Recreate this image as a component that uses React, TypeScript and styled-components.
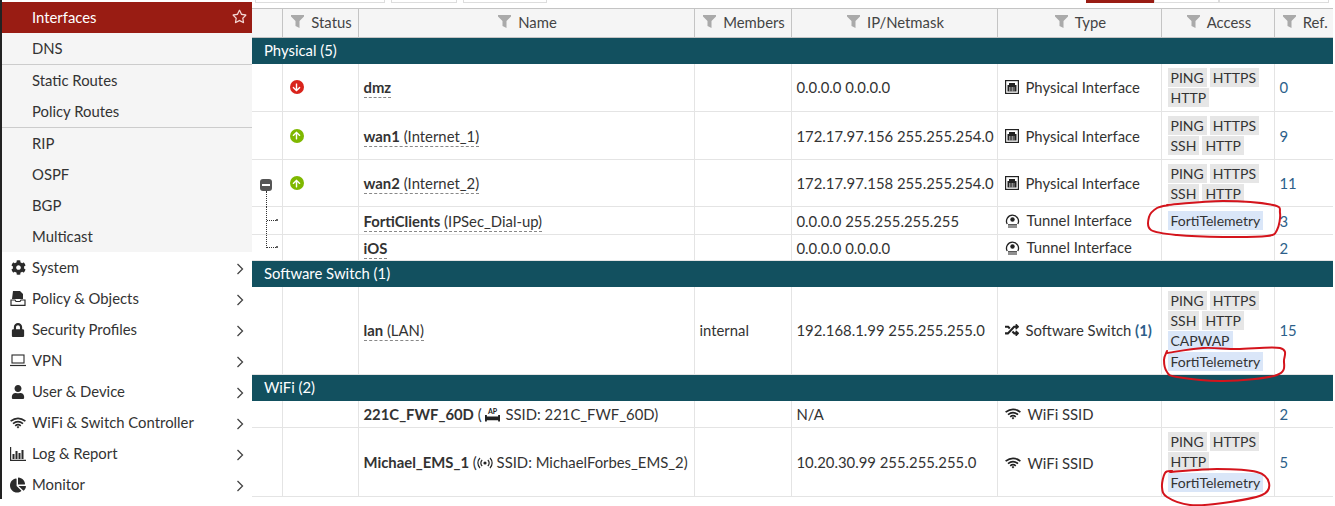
import React from "react";
import styled, { createGlobalStyle } from "styled-components";
import { FaCog, FaLock, FaUser, FaChartPie, FaRegStar, FaRandom, FaArrowUp, FaArrowDown } from "react-icons/fa";

const GlobalStyle = createGlobalStyle`
  html, body {
    margin: 0;
    padding: 0;
    background: #fff;
  }
  body {
    font-family: Lato, "Open Sans", sans-serif;
    font-size: 14.85px;
    color: #333;
    overflow: hidden;
  }
`;

const Page = styled.div`
  position: relative;
  width: 1335px;
  height: 506px;
  display: flex;
  overflow: hidden;
`;

const Sidebar = styled.nav`
  width: 252px;
  height: 499px;
  flex: none;
  box-sizing: border-box;
  border-left: 2px solid #222;
  padding-top: 2px;
  background: #fff;
`;

const SubMenu = styled.div`
  background: #f5f5f5;
`;

const SubItem = styled.div<{ $active?: boolean; $divider?: boolean }>`
  height: ${(p) => (p.$divider ? "32px" : "31px")};
  box-sizing: border-box;
  display: flex;
  align-items: center;
  justify-content: space-between;
  padding: 0 5px 2px 30px;
  background: ${(p) => (p.$active ? "#991c13" : "transparent")};
  color: ${(p) => (p.$active ? "#fff" : "#333")};
  border-bottom: ${(p) => (p.$divider ? "1px solid #ccc" : "none")};
`;

const MenuItem = styled.div`
  height: 31px;
  box-sizing: border-box;
  display: flex;
  align-items: center;
  gap: 6px;
  padding: 0 8px 2px 8px;
  color: #333;
  background: #fff;
`;

const MenuIcon = styled.span`
  width: 16px;
  height: 16px;
  margin-top: 2px;
  display: flex;
  align-items: center;
  justify-content: center;
  color: #2b2b2b;
  flex: none;
`;

const MenuLabel = styled.span`
  flex: 1;
`;

const Main = styled.main`
  flex: 1;
  min-width: 0;
  padding-right: 2px;
`;

const Toolbar = styled.div`
  height: 8px;
  display: flex;
  padding-left: 3px;
  overflow: hidden;
`;

const ToolBox = styled.div<{ $width: number; $left: number; $active?: boolean }>`
  width: ${(p) => p.$width}px;
  margin-left: ${(p) => p.$left}px;
  height: 8px;
  box-sizing: border-box;
  margin-top: -5px;
  flex: none;
  background: ${(p) => (p.$active ? "#991c13" : "#fff")};
  border: 1px solid ${(p) => (p.$active ? "#991c13" : "#ddd")};
`;

const Table = styled.table`
  width: 1081px;
  border-collapse: collapse;
  table-layout: fixed;
`;

const HeadCell = styled.th<{ $w: number }>`
  width: ${(p) => p.$w}px;
  height: 29px;
  box-sizing: border-box;
  padding: 0 0 2px 3px;
  background: #f5f5f5;
  font-weight: 400;
  font-size: 14.85px;
  color: #444;
  border-top: 1px solid #c4c4c4;
  border-bottom: 1px solid #c4c4c4;
  border-left: 1px solid #c4c4c4;
  &:first-child {
    border-left: none;
  }
`;

const HeadInner = styled.span`
  display: inline-flex;
  align-items: center;
  gap: 7px;
`;

const GroupCell = styled.td`
  height: 26px;
  padding: 0 0 2px 12px;
  box-sizing: border-box;
  background: #12505f;
  color: #fff;
`;

const Row = styled.tr<{ $h: number }>`
  height: ${(p) => p.$h}px;
`;

const Cell = styled.td`
  padding: 0 0 0 5px;
  box-sizing: border-box;
  white-space: nowrap;
  overflow: visible;
  border-left: 1px solid #e4e4e4;
  border-bottom: 1px solid #e4e4e4;
  color: #333;
`;

const StatusCell = styled(Cell)`
  padding: 0 0 0 7px;
`;

const ExpandCell = styled(Cell)`
  position: relative;
  border-left: none;
  padding: 0;
`;

const NameLink = styled.span<{ $plain?: boolean }>`
  border-bottom: ${(p) => (p.$plain ? "none" : "1px dashed #888")};
  padding-bottom: 1px;
  & > b {
    font-weight: 700;
    color: #333;
  }
`;

const Dot = styled.span<{ $color: string }>`
  display: flex;
  align-items: center;
  justify-content: center;
  width: 14px;
  height: 14px;
  border-radius: 50%;
  background: ${(p) => p.$color};
  color: #fff;
`;

const MinusBox = styled.span`
  position: absolute;
  left: 8px;
  top: 19px;
  width: 12px;
  height: 12px;
  border-radius: 3px;
  background: #555;
  display: flex;
  align-items: center;
  justify-content: center;
  &::after {
    content: "";
    width: 8px;
    height: 2px;
    background: #fff;
  }
  &::before {
    content: "";
    position: absolute;
    top: 12px;
    left: 6px;
    height: 16px;
    border-left: 1px dotted #333;
  }
`;

const TreeLine = styled.span<{ $end?: boolean }>`
  position: absolute;
  left: 14px;
  top: 0;
  height: ${(p) => (p.$end ? "13px" : "100%")};
  border-left: 1px dotted #333;
  &::after {
    content: "";
    position: absolute;
    top: ${(p) => (p.$end ? "12px" : "13px")};
    left: 0;
    width: 9px;
    border-top: 1px dotted #333;
  }
  &::before {
    content: "";
    position: absolute;
    top: ${(p) => (p.$end ? "11px" : "12px")};
    left: 9px;
    width: 2px;
    height: 2px;
    border-radius: 50%;
    background: #333;
  }
`;

const TypeWrap = styled.span`
  display: inline-flex;
  align-items: center;
  gap: 7px;
  padding: 1px 0 0 2px;
`;

const Count = styled.b`
  color: #2d5f8a;
  font-weight: 700;
`;

const TagCell = styled(Cell)`
  padding: 4px 0 0 6px;
  white-space: normal;
  line-height: 0;
  vertical-align: top;
`;

const Tag = styled.span<{ $blue?: boolean }>`
  display: inline-block;
  height: 19px;
  line-height: 19px;
  padding: 0 3px;
  margin: 0 3px 1.4px 0;
  font-size: 14px;
  background: ${(p) => (p.$blue ? "#dae6f8" : "#e6e6e6")};
  color: #333;
`;

const RefCell = styled(Cell)`
  color: #2d5f8a;
`;

const Annotation = styled.svg`
  position: absolute;
  inset: 0;
  width: 1335px;
  height: 506px;
  pointer-events: none;
`;

const Funnel = () => (
  <svg width="13" height="13" viewBox="0 0 13 13">
    <path d="M0 0h13v1.5L8.5 6v7L4.5 11V6L0 1.5z" fill="#aaa" />
  </svg>
);

const Chevron = () => (
  <svg width="8" height="12" viewBox="0 0 8 12" style={{ marginTop: 4 }}>
    <path d="M1.5 1l5 5-5 5" fill="none" stroke="#444" strokeWidth="1.3" />
  </svg>
);

const WifiIcon = ({ color = "#2b2b2b" }: { color?: string }) => (
  <svg width="16" height="12" viewBox="0 0 16 12" fill="none" stroke={color} strokeWidth="1.7">
    <path d="M0.6 4.2Q8 -1.6 15.4 4.2M3 6.6Q8 2.6 13 6.6M5.2 8.8Q8 6.6 10.8 8.8" />
    <path d="M6.6 10L8 8.9 9.4 10 8 11.6z" fill={color} stroke="none" />
  </svg>
);

const PortIcon = () => (
  <svg width="14" height="14" viewBox="0 0 14 14">
    <rect x="0.6" y="0.6" width="12.8" height="12.8" fill="#fff" stroke="#222" strokeWidth="1.2" />
    <path d="M2.5 11.5V5H4V3h6v2h1.5v6.5z" fill="#222" />
    <path d="M4.5 7v4.5M6 7v4.5M7.5 7v4.5M9 7v4.5" stroke="#fff" strokeWidth="0.5" />
  </svg>
);

const TunnelIcon = () => (
  <svg width="15" height="15" viewBox="0 0 15 15">
    <path d="M2.2 11a6 6 0 1 1 10.6 0" fill="none" stroke="#222" strokeWidth="1.3" />
    <circle cx="7.5" cy="6.5" r="2.2" fill="#222" />
    <path d="M3 11.8h9M3 14h9" stroke="#222" strokeWidth="1.2" />
  </svg>
);

const PolicyIcon = () => (
  <svg width="16" height="15" viewBox="0 0 16 15">
    <path d="M3 0h7l3 3v5H2z" fill="#2b2b2b" />
    <path d="M1 9h4l1 1.5h4L11 9h4v5.4H1z" fill="#fff" stroke="#2b2b2b" strokeWidth="1.2" />
  </svg>
);

const LaptopIcon = () => (
  <svg width="16" height="13" viewBox="0 0 16 13">
    <rect x="2" y="1" width="12" height="8" fill="none" stroke="#2b2b2b" strokeWidth="1.1" />
    <path d="M0 11.5h16" stroke="#2b2b2b" strokeWidth="1.2" />
  </svg>
);

const ReportIcon = () => (
  <svg width="16" height="14" viewBox="0 0 16 14">
    <path d="M0.6 0v13.4H16" fill="none" stroke="#2b2b2b" strokeWidth="1.2" />
    <path d="M3.5 7v5M6.5 4v8M9.5 6v6M12.5 3v9" stroke="#2b2b2b" strokeWidth="2" />
  </svg>
);

const ApIcon = () => (
  <svg width="15" height="15" viewBox="0 0 16 15" style={{ verticalAlign: -2, margin: "0 2px 0 3px" }}>
    <text x="8" y="6.5" textAnchor="middle" fontSize="7.5" fontWeight="700" fontFamily="Lato" fill="#222">AP</text>
    <path d="M0 8h2v1.5h12V8h2v7h-2v-1.5H2V15H0z" fill="#222" />
  </svg>
);

const BroadcastIcon = () => (
  <svg width="16" height="12" viewBox="0 0 16 12" fill="none" stroke="#222" strokeWidth="1.2" style={{ verticalAlign: -1 }}>
    <circle cx="8" cy="6" r="1.6" fill="#222" stroke="none" />
    <path d="M5.2 3a4 4 0 0 0 0 6M10.8 3a4 4 0 0 1 0 6M3 1a7 7 0 0 0 0 10M13 1a7 7 0 0 1 0 10" />
  </svg>
);

const columns: [string, number][] = [
  ["", 30],
  ["Status", 76],
  ["Name", 336],
  ["Members", 97],
  ["IP/Netmask", 206],
  ["Type", 164],
  ["Access", 113],
  ["Ref.", 59],
];

const subItems = [
  { label: "Interfaces", active: true },
  { label: "DNS", divider: true },
  { label: "Static Routes" },
  { label: "Policy Routes", divider: true },
  { label: "RIP" },
  { label: "OSPF" },
  { label: "BGP" },
  { label: "Multicast" },
];

const menuItems: [string, React.ReactNode][] = [
  ["System", <FaCog size={15} />],
  ["Policy & Objects", <PolicyIcon />],
  ["Security Profiles", <FaLock size={14} />],
  ["VPN", <LaptopIcon />],
  ["User & Device", <FaUser size={14} />],
  ["WiFi & Switch Controller", <WifiIcon />],
  ["Log & Report", <ReportIcon />],
  ["Monitor", <FaChartPie size={16} />],
];

type IfaceRow = {
  height: number;
  status?: "up" | "down";
  name: string;
  alias?: React.ReactNode;
  plain?: boolean;
  members?: string;
  ip: string;
  type: React.ReactNode;
  tags: [string, boolean?][];
  ref: string;
  tree?: "minus" | "mid" | "end";
};

const physical = <TypeWrap><PortIcon />Physical Interface</TypeWrap>;
const tunnel = <TypeWrap><TunnelIcon />Tunnel Interface</TypeWrap>;
const wifi = <TypeWrap><WifiIcon color="#222" />WiFi SSID</TypeWrap>;
const softSwitch = <TypeWrap><FaRandom size={14} color="#222" /><span>Software Switch <Count>(1)</Count></span></TypeWrap>;

const groups: { title: string; rows: IfaceRow[] }[] = [
  {
    title: "Physical (5)",
    rows: [
      { height: 48, status: "down", name: "dmz", ip: "0.0.0.0 0.0.0.0", type: physical, tags: [["PING"], ["HTTPS"], ["HTTP"]], ref: "0" },
      { height: 48, status: "up", name: "wan1", alias: " (Internet_1)", ip: "172.17.97.156 255.255.254.0", type: physical, tags: [["PING"], ["HTTPS"], ["SSH"], ["HTTP"]], ref: "9" },
      { height: 47, status: "up", name: "wan2", alias: " (Internet_2)", ip: "172.17.97.158 255.255.254.0", type: physical, tags: [["PING"], ["HTTPS"], ["SSH"], ["HTTP"]], ref: "11", tree: "minus" },
      { height: 28, name: "FortiClients", alias: " (IPSec_Dial-up)", ip: "0.0.0.0 255.255.255.255", type: tunnel, tags: [["FortiTelemetry", true]], ref: "3", tree: "mid" },
      { height: 26, name: "iOS", ip: "0.0.0.0 0.0.0.0", type: tunnel, tags: [], ref: "2", tree: "end" },
    ],
  },
  {
    title: "Software Switch (1)",
    rows: [
      { height: 88, name: "lan", alias: " (LAN)", members: "internal", ip: "192.168.1.99 255.255.255.0", type: softSwitch, tags: [["PING"], ["HTTPS"], ["SSH"], ["HTTP"], ["CAPWAP", true], ["FortiTelemetry", true]], ref: "15" },
    ],
  },
  {
    title: "WiFi (2)",
    rows: [
      { height: 27, name: "221C_FWF_60D", plain: true, alias: <> (<ApIcon /> SSID: 221C_FWF_60D)</>, ip: "N/A", type: wifi, tags: [], ref: "2" },
      { height: 69, name: "Michael_EMS_1", plain: true, alias: <> (<BroadcastIcon /> SSID: MichaelForbes_EMS_2)</>, ip: "10.20.30.99 255.255.255.0", type: wifi, tags: [["PING"], ["HTTPS"], ["HTTP"], ["FortiTelemetry", true]], ref: "5" },
    ],
  },
];

const circles: [number, number][][] = [
  [[1167, 205], [1223, 201], [1273, 205], [1280, 213], [1277, 230], [1267, 236], [1223, 237], [1177, 235], [1151, 230], [1149, 217], [1157, 208], [1169, 205]],
  [[1167, 353], [1203, 348], [1237, 349], [1280, 348], [1284, 360], [1277, 375], [1223, 381], [1177, 377], [1167, 372], [1164, 360], [1167, 351]],
  [[1170, 472], [1217, 469], [1257, 472], [1269, 483], [1262, 495], [1223, 503], [1190, 505], [1167, 497], [1162, 487], [1165, 473], [1172, 471]],
];

// smooth line through the hand-picked points
const toPath = (pts: [number, number][]): string => {
  let d = `M${pts[0][0]} ${pts[0][1]}`;
  for (let i = 0; i < pts.length - 1; i++) {
    const p0 = pts[Math.max(i - 1, 0)];
    const p1 = pts[i];
    const p2 = pts[i + 1];
    const p3 = pts[Math.min(i + 2, pts.length - 1)];
    const c1 = [p1[0] + (p2[0] - p0[0]) / 6, p1[1] + (p2[1] - p0[1]) / 6];
    const c2 = [p2[0] - (p3[0] - p1[0]) / 6, p2[1] - (p3[1] - p1[1]) / 6];
    d += `C${c1[0]} ${c1[1]} ${c2[0]} ${c2[1]} ${p2[0]} ${p2[1]}`;
  }
  return d;
};

const App = (): React.JSX.Element => {
  return (
    <React.Fragment>
      <GlobalStyle />
      <Page>
        <Sidebar>
          <SubMenu>
            {subItems.map((item) => (
              <SubItem key={item.label} $active={item.active} $divider={item.divider}>
                {item.label}
                {item.active ? <FaRegStar size={15} color="#f3d6d3" /> : null}
              </SubItem>
            ))}
          </SubMenu>
          {menuItems.map(([label, icon]) => (
            <MenuItem key={label}>
              <MenuIcon>{icon}</MenuIcon>
              <MenuLabel>{label}</MenuLabel>
              <Chevron />
            </MenuItem>
          ))}
        </Sidebar>
        <Main>
          <Toolbar>
            <ToolBox $left={0} $width={130} />
            <ToolBox $left={6} $width={66} />
            <ToolBox $left={6} $width={84} />
            <ToolBox $left={539} $width={68} $active />
            <ToolBox $left={0} $width={65} />
            <ToolBox $left={0} $width={110} />
          </Toolbar>
          <Table>
            <thead>
              <tr>
                {columns.map(([title, width]) => (
                  <HeadCell key={title || "expand"} $w={width}>
                    {title ? (
                      <HeadInner>
                        <Funnel />
                        {title}
                      </HeadInner>
                    ) : null}
                  </HeadCell>
                ))}
              </tr>
            </thead>
            <tbody>
              {groups.map((group) => (
                <React.Fragment key={group.title}>
                  <tr>
                    <GroupCell colSpan={8}>{group.title}</GroupCell>
                  </tr>
                  {group.rows.map((row) => (
                    <Row key={row.name} $h={row.height}>
                      <ExpandCell>
                        {row.tree === "minus" ? <MinusBox /> : null}
                        {row.tree === "mid" ? <TreeLine /> : null}
                        {row.tree === "end" ? <TreeLine $end /> : null}
                      </ExpandCell>
                      <StatusCell>
                        {row.status === "up" ? (
                          <Dot $color="#7fb800"><FaArrowUp size={9} /></Dot>
                        ) : null}
                        {row.status === "down" ? (
                          <Dot $color="#d9241c"><FaArrowDown size={9} /></Dot>
                        ) : null}
                      </StatusCell>
                      <Cell>
                        <NameLink $plain={row.plain}>
                          <b>{row.name}</b>
                          {row.alias}
                        </NameLink>
                      </Cell>
                      <Cell>{row.members}</Cell>
                      <Cell>{row.ip}</Cell>
                      <Cell>{row.type}</Cell>
                      <TagCell>
                        {row.tags.map(([tag, blue]) => (
                          <Tag key={tag} $blue={blue}>{tag}</Tag>
                        ))}
                      </TagCell>
                      <RefCell>{row.ref}</RefCell>
                    </Row>
                  ))}
                </React.Fragment>
              ))}
            </tbody>
          </Table>
        </Main>
        <Annotation viewBox="0 0 1335 506" fill="none" stroke="#d4141c" strokeWidth="2" strokeLinecap="round">
          {circles.map((pts) => (
            <path key={pts[0][0] + pts[0][1]} d={toPath(pts)} />
          ))}
        </Annotation>
      </Page>
    </React.Fragment>
  );
};

export default App;
